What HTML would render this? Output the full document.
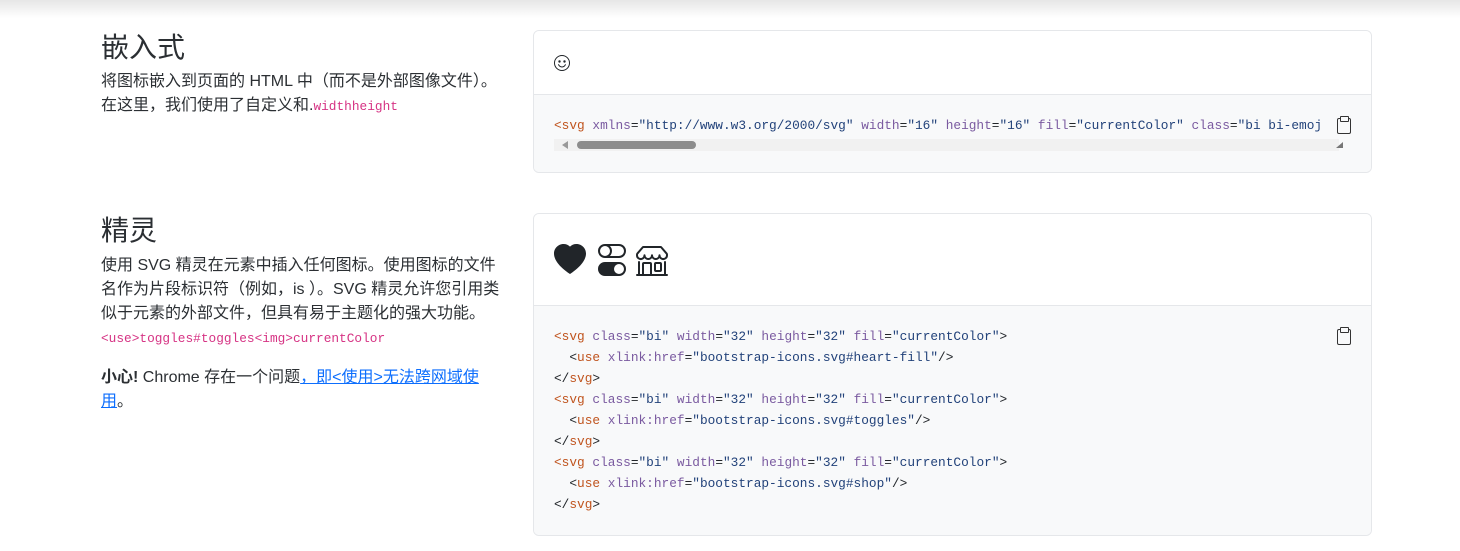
<!DOCTYPE html>
<html><head><meta charset="utf-8">
<style>
*{margin:0;padding:0;box-sizing:border-box}
body{width:1460px;height:551px;overflow:hidden;background:#fff;font-family:"Liberation Sans","Noto Sans CJK SC",sans-serif;color:#2b2f33;position:relative}
.shadow{position:absolute;left:0;top:0;width:1460px;height:18px;background:linear-gradient(#e6e6e6,#fff)}
.l{position:absolute;left:101px;font-size:16px;line-height:24px;white-space:nowrap}
h2{font-size:28px;font-weight:400;line-height:34px;margin-bottom:4px}
code{font-family:"Liberation Mono",monospace;font-size:12.8px;color:#d63384}
a{color:#0d6efd;text-decoration:underline}
.card{position:absolute;left:533px;width:839px;border:1px solid #e5e7ea;border-radius:6px;overflow:hidden}
.top{background:#fff;border-bottom:1px solid #e5e7ea}
.codebox{background:#f8f9fa;position:relative}
.code{font-family:"Liberation Mono",monospace;font-size:12.8px;line-height:21px;white-space:pre;color:#212529}
.t{color:#c0541e}.a{color:#7a5aa0}.s{color:#22427a}
.clip{position:absolute;right:20px;width:14px;height:16px;border:1.5px solid #333;border-radius:2px}
.clip:before{content:"";position:absolute;left:2px;top:-3px;width:7px;height:4px;border:1.5px solid #333;border-radius:1px;background:#f8f9fa}
</style></head><body>
<div class="shadow"></div>
<div class="l" style="top:31px"><h2>嵌入式</h2>
<div style="margin-top:5px">将图标嵌入到页面的 HTML 中（而不是外部图像文件）。<br>在这里，我们使用了自定义和.<code>widthheight</code></div></div>

<div class="l" style="top:214px"><h2>精灵</h2>
<div style="margin-top:6px">使用 SVG 精灵在元素中插入任何图标。使用图标的文件<br>名作为片段标识符（例如，is ）。SVG 精灵允许您引用类<br>似于元素的外部文件，但具有易于主题化的强大功能。<br><code>&lt;use&gt;toggles#toggles&lt;img&gt;currentColor</code></div>
<div style="margin-top:15px"><b>小心!</b> Chrome 存在一个问题<a>，即&lt;使用&gt;无法跨网域使</a><br><a>用</a>。</div></div>

<div class="card" style="top:30px;height:143px">
<div class="top" style="height:64px;position:relative">
<svg style="position:absolute;left:20px;top:24px" width="16" height="16" viewBox="0 0 16 16" fill="#212529"><path d="M8 15A7 7 0 1 1 8 1a7 7 0 0 1 0 14zm0 1A8 8 0 1 0 8 0a8 8 0 0 0 0 16z"/><path d="M4.3 9.2a.5.5 0 0 1 .7.2A3.5 3.5 0 0 0 8 11.5a3.5 3.5 0 0 0 3-2.1.5.5 0 0 1 .9.4A4.5 4.5 0 0 1 8 12.5a4.5 4.5 0 0 1-3.9-2.6.5.5 0 0 1 .2-.7z"/><circle cx="5.5" cy="6.5" r="1.2"/><circle cx="10.5" cy="6.5" r="1.2"/></svg>
</div>
<div class="codebox" style="height:78px">
<div class="code" style="position:absolute;left:20px;top:20px"><span class="t">&lt;svg</span> <span class="a">xmlns</span>=<span class="s">"http://www.w3.org/2000/svg"</span> <span class="a">width</span>=<span class="s">"16"</span> <span class="a">height</span>=<span class="s">"16"</span> <span class="a">fill</span>=<span class="s">"currentColor"</span> <span class="a">class</span>=<span class="s">"bi bi-emoj</span></div>
<div class="clip" style="top:23px"></div>
<div style="position:absolute;left:20px;top:44px;width:785px;height:12px;background:#f1f1f1"></div>
<div style="position:absolute;left:28px;top:46px;width:0;height:0;border-top:4px solid transparent;border-bottom:4px solid transparent;border-right:6px solid #999"></div>
<div style="position:absolute;left:43px;top:46px;width:119px;height:8px;border-radius:4px;background:#8c8c8c"></div>
<div style="position:absolute;left:802px;top:47px;width:0;height:0;border-left:7px solid transparent;border-bottom:6px solid #777"></div>
</div></div>

<div class="card" style="top:213px;height:323px">
<div class="top" style="height:92px;position:relative">
<svg style="position:absolute;left:20px;top:30px" width="32" height="32" viewBox="0 0 16 16" fill="#212529"><path fill-rule="evenodd" d="M8 1.314C12.438-3.248 23.534 4.735 8 15-7.534 4.736 3.562-3.248 8 1.314z"/></svg>
<svg style="position:absolute;left:62px;top:30px" width="32" height="32" viewBox="0 0 16 16" fill="#212529"><path d="M4.5 9a3.5 3.5 0 1 0 0 7h7a3.5 3.5 0 1 0 0-7h-7zm7 6a2.5 2.5 0 1 1 0-5 2.5 2.5 0 0 1 0 5zm-7-14a2.5 2.5 0 1 0 0 5 2.5 2.5 0 0 0 0-5zm2.45 0A3.49 3.49 0 0 1 8 3.5 3.49 3.49 0 0 1 6.95 6h4.55a2.5 2.5 0 0 0 0-5H6.95zM4.5 0h7a3.5 3.5 0 1 1 0 7h-7a3.5 3.5 0 1 1 0-7z"/></svg>
<svg style="position:absolute;left:102px;top:30px" width="32" height="32" viewBox="0 0 16 16" fill="#212529"><path d="M2.97 1.35A1 1 0 0 1 3.730 1h8.54a1 1 0 0 1 .76.35l2.609 3.044A1.5 1.5 0 0 1 16 5.37v.255a2.375 2.375 0 0 1-4.250 1.458A2.371 2.371 0 0 1 9.875 8 2.370 2.370 0 0 1 8 7.083 2.370 2.370 0 0 1 6.125 8a2.370 2.370 0 0 1-1.875-.917A2.375 2.375 0 0 1 0 5.625V5.370a1.500 1.500 0 0 1 .361-.976l2.610-3.045zm1.780 4.275a1.375 1.375 0 0 0 2.750 0 .5.5 0 0 1 1 0 1.375 1.375 0 0 0 2.750 0 .5.5 0 0 1 1 0 1.375 1.375 0 1 0 2.750 0V5.370a.5.5 0 0 0-.120-.325L12.270 2H3.730L1.120 5.045A.5.5 0 0 0 1 5.370v.255a1.375 1.375 0 0 0 2.750 0 .5.5 0 0 1 1 0zM1.500 8.500A.5.5 0 0 1 2 9v6h1v-5a1 1 0 0 1 1-1h3a1 1 0 0 1 1 1v5h6V9a.5.5 0 0 1 1 0v6h.5a.5.5 0 0 1 0 1H.5a.5.5 0 0 1 0-1H1V9a.5.5 0 0 1 .5-.5zM4 15h3v-5H4v5zm5-5a1 1 0 0 1 1-1h2a1 1 0 0 1 1 1v3a1 1 0 0 1-1 1h-2a1 1 0 0 1-1-1v-3zm3 0h-2v3h2v-3z"/></svg>
</div>
<div class="codebox" style="height:230px">
<div class="clip" style="top:23px"></div>
<div class="code" style="position:absolute;left:20px;top:20px"><span class="t">&lt;svg</span> <span class="a">class</span>=<span class="s">"bi"</span> <span class="a">width</span>=<span class="s">"32"</span> <span class="a">height</span>=<span class="s">"32"</span> <span class="a">fill</span>=<span class="s">"currentColor"</span>&gt;
  &lt;<span class="t">use</span> <span class="a">xlink:href</span>=<span class="s">"bootstrap-icons.svg#heart-fill"</span>/&gt;
&lt;/<span class="t">svg</span>&gt;
<span class="t">&lt;svg</span> <span class="a">class</span>=<span class="s">"bi"</span> <span class="a">width</span>=<span class="s">"32"</span> <span class="a">height</span>=<span class="s">"32"</span> <span class="a">fill</span>=<span class="s">"currentColor"</span>&gt;
  &lt;<span class="t">use</span> <span class="a">xlink:href</span>=<span class="s">"bootstrap-icons.svg#toggles"</span>/&gt;
&lt;/<span class="t">svg</span>&gt;
<span class="t">&lt;svg</span> <span class="a">class</span>=<span class="s">"bi"</span> <span class="a">width</span>=<span class="s">"32"</span> <span class="a">height</span>=<span class="s">"32"</span> <span class="a">fill</span>=<span class="s">"currentColor"</span>&gt;
  &lt;<span class="t">use</span> <span class="a">xlink:href</span>=<span class="s">"bootstrap-icons.svg#shop"</span>/&gt;
&lt;/<span class="t">svg</span>&gt;</div></div></div>
</body></html>
